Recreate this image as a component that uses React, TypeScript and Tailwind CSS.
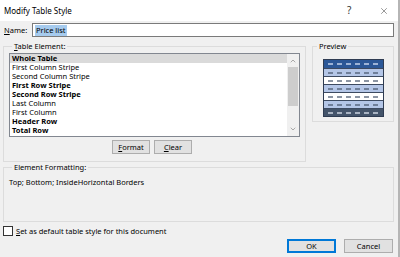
import { X, ChevronUp, ChevronDown } from "lucide-react";

const items: { label: string; bold?: boolean }[] = [
  { label: "Whole Table", bold: true },
  { label: "First Column Stripe" },
  { label: "Second Column Stripe" },
  { label: "First Row Stripe", bold: true },
  { label: "Second Row Stripe", bold: true },
  { label: "Last Column" },
  { label: "First Column" },
  { label: "Header Row", bold: true },
  { label: "Total Row", bold: true },
];

const previewRows = [
  { bg: "bg-[#2b5797]", dash: "bg-[#9db3d6]" },
  { bg: "bg-[#b4c6e7]", dash: "bg-[#6f7f99]" },
  { bg: "bg-white", dash: "bg-[#8c95a3]" },
  { bg: "bg-[#b4c6e7]", dash: "bg-[#6f7f99]" },
  { bg: "bg-white", dash: "bg-[#8c95a3]" },
  { bg: "bg-[#b4c6e7]", dash: "bg-[#6f7f99]" },
  { bg: "bg-[#44546a]", dash: "bg-[#a9b3c2]" },
];

function Preview() {
  return (
    <div className="w-[61px] border border-[#2f3c52] flex flex-col">
      {previewRows.map((r, i) => (
        <div
          key={i}
          className={`${r.bg} h-[8px] flex items-center justify-around px-[2px] border-t border-[#3d4a60] first:border-t-0`}
        >
          {[0, 1, 2, 3, 4, 5].map((c) => (
            <span key={c} className={`${r.dash} w-[5px] h-[2px]`} />
          ))}
        </div>
      ))}
    </div>
  );
}

function Btn({ children, primary }: { children: React.ReactNode; primary?: boolean }) {
  return (
    <div
      className={`h-[14px] flex items-center justify-center bg-[#e1e1e1] ${
        primary ? "border-2 border-[#0078d7]" : "border border-[#adadad]"
      }`}
    >
      {children}
    </div>
  );
}

export default function App() {
  return (
    <div className="w-[400px] h-[257px] bg-[#f0f0f0] flex flex-col text-[7.5px] leading-[9px] text-black overflow-hidden border-r-2 border-[#b5b5b5] font-['Noto_Sans','Liberation_Sans',sans-serif]">
      {/* title bar */}
      <div className="h-[21px] bg-white flex items-center pl-[4px] shrink-0">
        <span className="text-[8px] flex-1">Modify Table Style</span>
        <span className="text-[10px] w-[10px] mr-[22px] text-[#333]">?</span>
        <X size={10} strokeWidth={1.2} className="mr-[9px] text-[#333]" />
      </div>

      {/* name */}
      <div className="flex items-center mt-[2px] pl-[4px] pr-[4px] h-[14px]">
        <span className="w-[28px]">
          <u>N</u>ame:
        </span>
        <div className="flex-1 h-[14px] border border-[#7a7a7a] bg-white flex items-center pl-[2px]">
          <span className="bg-[#a6cbee] px-[1px] leading-[11px]">Price list</span>
        </div>
      </div>

      {/* middle */}
      <div className="flex mt-[5px] pl-[3px] pr-[4px] gap-[6px] items-start">
        <fieldset className="w-[303px] h-[120px] border border-[#dcdcdc] px-[5px] pt-[2px]">
          <legend className="ml-[3px] px-[2px]">
            <u>T</u>able Element:
          </legend>
          <div className="h-[84px] border border-[#828790] bg-white flex">
            <div className="flex-1">
              {items.map((it, i) => (
                <div
                  key={it.label}
                  className={`h-[9px] leading-[9px] pl-[2px] ${it.bold ? "font-bold" : ""} ${
                    i === 0 ? "bg-[#dadada]" : ""
                  }`}
                >
                  {it.label}
                </div>
              ))}
            </div>
            <div className="w-[12px] bg-[#f0f0f0] flex flex-col items-center">
              <ChevronUp size={8} strokeWidth={1.5} className="mt-[3px] text-[#606060]" />
              <div className="w-[10px] h-[39px] bg-[#cdcdcd] mt-[2px]" />
              <div className="flex-1" />
              <ChevronDown size={8} strokeWidth={1.5} className="mb-[3px] text-[#606060]" />
            </div>
          </div>
          <div className="flex gap-[4px] mt-[3px] pl-[103px]">
            <div className="w-[38px]">
              <Btn>
                <u>F</u>ormat
              </Btn>
            </div>
            <div className="w-[38px]">
              <Btn>
                <u>C</u>lear
              </Btn>
            </div>
          </div>
        </fieldset>

        <fieldset className="w-[82px] h-[80px] border border-[#dcdcdc] flex flex-col items-center pt-[4px]">
          <legend className="ml-[4px] px-[2px]">Preview</legend>
          <div className="flex justify-center pt-[4px]">
            <Preview />
          </div>
        </fieldset>
      </div>

      {/* element formatting */}
      <fieldset className="ml-[3px] mr-[4px] mt-[1px] h-[59px] border border-[#dcdcdc] px-[5px]">
        <legend className="ml-[3px] px-[2px]">Element Formatting:</legend>
        <div className="mt-[6px]">Top; Bottom; InsideHorizontal Borders</div>
      </fieldset>

      {/* checkbox */}
      <div className="flex items-center gap-[3px] pl-[3px] mt-[4px]">
        <div className="w-[10px] h-[10px] border border-[#333] bg-white" />
        <span>
          <u>S</u>et as default table style for this document
        </span>
      </div>

      {/* buttons */}
      <div className="flex justify-end gap-[8px] pr-[5px] mt-[3px]">
        <div className="w-[49px]">
          <Btn primary>OK</Btn>
        </div>
        <div className="w-[49px]">
          <Btn>Cancel</Btn>
        </div>
      </div>
    </div>
  );
}
